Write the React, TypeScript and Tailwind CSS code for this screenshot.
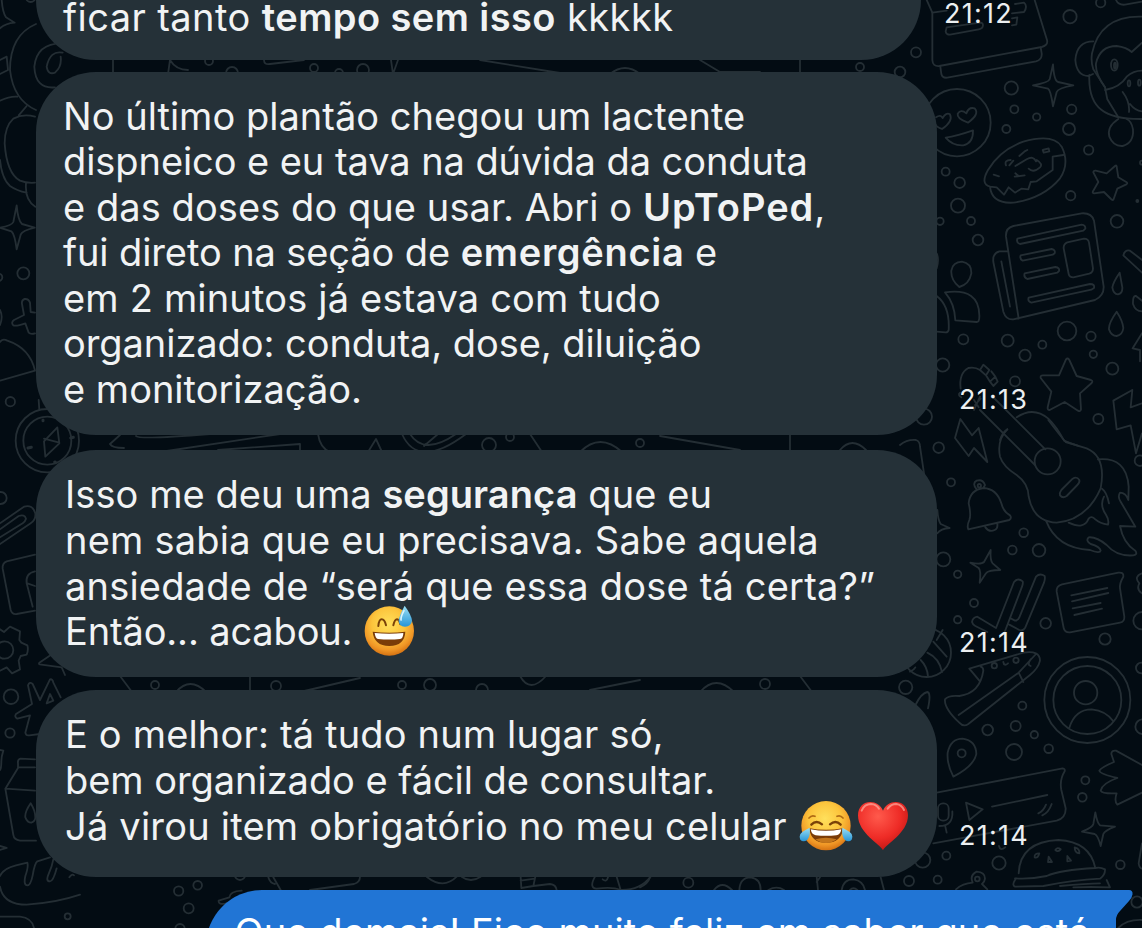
import type { ReactNode } from 'react';

interface BubbleRowProps {
  children: ReactNode;
  bubble: string;
  time: string;
  timeClass: string;
}

const Doodles = () => (
  <svg
    className="absolute inset-0 h-full w-full"
    viewBox="0 0 1142 928"
    fill="none"
    stroke="#242e34"
    strokeLinecap="round"
    strokeLinejoin="round"
  >
    <g transform="translate(900 0) scale(.33333)" strokeWidth="5.5">
      {/* laptop */}
      <path d="M80 0 L97 38 V180 Q98 200 118 198 L425 141 Q445 136 441 120 L404 0" />
      <path d="M97 38 L140 32 M121 200 L124 222 Q127 235 142 233 L408 184 Q427 179 425 160 L422 142" />
      <path d="M140 82 L240 68 Q252 68 248 80 Q246 86 236 88 L150 104 Q138 104 137 94 Z" />
      <path d="M336 40 L372 36 Q384 18 372 8 L345 12 M336 55 L352 52 L349 74 L336 76" />
      {/* heart eyes */}
      <circle cx="171" cy="368" r="101" />
      <path d="M108 352 Q122 342 128 354 Q138 336 150 343 Q160 364 126 387 Q110 382 106 372" />
      <path d="M204 368 Q170 356 173 341 Q183 326 199 340 Q206 320 224 325 Q240 342 204 368Z" />
      <path d="M137 413 Q170 408 219 391 Q220 430 190 436 Q158 438 137 413Z" />
      {/* sparkle */}
      <path d="M459 193 Q462 242 474 246 L520 256 Q474 264 470 276 L459 319 Q452 270 444 266 L399 256 Q446 248 449 238Z" />
      {/* donut */}
      <path d="M270 560 Q240 552 264 510 Q300 450 370 425 Q460 400 485 440 Q510 490 480 535 Q430 595 340 608 Q275 612 270 560 L290 562 L312 584 L326 562 L345 578 L364 566 L385 568 L392 546 L410 544 L458 510 V470 L490 465" />
      <path d="M428 450 L446 445 L448 454 L431 458Z M318 496 Q312 480 332 480 M328 496 L340 482 M346 498 L380 478 Q400 466 408 484 M358 468 L372 456 M374 454 L382 450 M410 480 Q430 492 420 502 Q400 520 386 506 M344 530 L374 526 M346 520 L356 528 M281 524 L297 529" />
      {/* monkey */}
      <path d="M726 50 Q600 46 576 160 Q572 185 580 208 L615 262 M580 124 Q530 124 526 180 Q530 228 566 228 L579 222 M568 225 Q565 300 605 330 Q640 358 726 357" />
      <path d="M615 262 Q585 220 588 190 Q600 138 650 138 Q680 142 695 156 L726 128 M615 270 Q660 262 680 230 Q700 212 726 212 M615 262 L622 298 L655 352 M668 276 Q690 305 687 336 M690 312 Q705 332 726 334" />
      <ellipse cx="643" cy="195" rx="10" ry="17" />
      <ellipse cx="645" cy="197" rx="3" ry="9" />
      <ellipse cx="687" cy="250" rx="4" ry="9" />
      <ellipse cx="718" cy="248" rx="4" ry="9" />
      <path d="M655 357 Q620 380 628 410 Q640 440 668 438 Q702 428 699 388 Q694 362 680 357" />
      {/* star */}
      <path d="M645 498 Q650 494 650 500 L655 532 L680 547 Q684 550 679 553 L652 566 L641 597 Q638 603 633 597 L612 576 L582 580 Q576 579 579 574 L595 546 L580 517 Q580 511 587 512 L620 520Z" />
      <path d="M648 0 Q655 16 675 14 L726 5" />
      <circle cx="602" cy="8" r="14" />
      <circle cx="510" cy="50" r="20" />
      <circle cx="48" cy="157" r="15" />
      <circle cx="0" cy="216" r="16" />
      <circle cx="334" cy="264" r="20" />
      <circle cx="343" cy="328" r="12" />
      <circle cx="410" cy="351" r="11" />
      <circle cx="319" cy="387" r="12" />
      <circle cx="515" cy="328" r="14" />
      <circle cx="507" cy="387" r="18" />
      <circle cx="566" cy="450" r="14" />
      <circle cx="512" cy="587" r="14" />
      <circle cx="137" cy="515" r="12" />
      <circle cx="179" cy="548" r="16" />
      <circle cx="712" cy="603" r="3" />
      <circle cx="726" cy="488" r="6" />
    </g>

    <g transform="translate(900 200) scale(.33333)" strokeWidth="5.5">
      {/* newspaper */}
      <path d="M356 356 L318 110 Q316 84 340 78 L545 40 Q575 38 582 62 L611 260 Q612 288 585 300 L340 358 Q318 360 310 335 L280 186 Q277 160 298 154 L323 154 M304 184 L330 320" />
      <path d="M352 116 L545 74 Q557 75 556 86 L550 92 L360 132 Q348 128 352 116Z M362 166 L455 147 Q467 150 464 160 L458 164 L368 182 Q358 176 362 166Z M374 220 L466 201 Q480 203 477 213 L472 218 L382 237 Q370 232 374 220Z M386 293 L570 252 Q585 252 582 264 L574 269 L394 308 Q382 304 386 293Z" />
      <path d="M502 127 L552 116 Q565 116 567 128 L579 205 Q579 218 568 221 L520 232 Q508 232 506 222 L491 145 Q490 132 502 127Z" />
      {/* people */}
      <path d="M178 261 Q152 240 154 212 Q158 186 186 185 Q215 190 214 220 Q208 252 178 261Z M135 277 Q240 262 238 350 Q238 366 230 366 L166 361 Q164 310 135 277Z M110 288 Q150 318 146 390 Q144 398 136 397 L110 395 M110 160 Q118 178 110 205" />
      <path d="M726 180 L690 152 Q674 148 670 166 L726 218" />
      <path d="M659 218 Q640 245 637 262 Q640 282 654 283 Q668 280 667 262Z M650 335 Q625 370 627 388 Q634 408 650 408 Q668 404 670 384 Q668 362 650 335Z M726 302 L708 288 Q698 286 699 312 Q706 334 726 334 M726 400 L698 445 L720 450 V484" />
      {/* star */}
      <path d="M498 478 Q503 472 508 480 L530 528 L573 540 Q580 543 575 549 L540 580 L543 628 Q541 636 534 632 L494 606 L449 630 Q442 630 443 622 L454 575 L422 534 Q420 526 429 526 L477 526Z" />
      <path d="M697 570 L640 602 L650 688 L692 676 L708 760 L726 700 M697 570 L692 622 L726 610" />
      {/* guitar head */}
      <path d="M182 566 Q176 520 205 504 Q225 500 240 510 M240 510 L250 494 L268 510 L258 526 L240 510 M258 526 L270 545 L286 530 L274 514 M270 545 L280 558 L293 545 L286 530 M222 630 L240 590 M180 578 Q172 585 184 592 M222 600 L236 622 M242 596 L225 615" />
      <path d="M240 630 L405 795 M276 588 L436 748 M350 652 Q400 618 445 656 Q470 680 492 722 Q510 730 535 738 M300 720 Q308 696 322 688" />
      <path d="M181 657 L165 714 L206 768 L222 744 L262 786 L236 684 L216 706Z" />
      <circle cx="174" cy="17" r="21" />
      <circle cx="120" cy="64" r="11" />
      <circle cx="213" cy="63" r="12" />
      <circle cx="234" cy="120" r="16" />
      <circle cx="651" cy="64" r="19" />
      <circle cx="190" cy="418" r="15" />
      <circle cx="323" cy="422" r="18" />
      <circle cx="375" cy="466" r="17" />
      <circle cx="427" cy="434" r="12" />
      <circle cx="501" cy="393" r="28" />
      <circle cx="573" cy="409" r="14" />
      <circle cx="580" cy="463" r="11" />
      <circle cx="637" cy="506" r="18" />
      <circle cx="345" cy="544" r="15" />
      <circle cx="128" cy="495" r="20" />
      <circle cx="595" cy="657" r="15" />
      <circle cx="72" cy="650" r="24" />
    </g>

    <g transform="translate(900 420) scale(.33333)" strokeWidth="5.5">
      {/* guitar body */}
      <path d="M322 28 Q290 60 300 110 Q310 140 350 165 Q385 190 386 230 Q400 305 470 308 Q560 300 602 205 Q620 110 560 85 L497 66 Q475 40 445 0" />
      <circle cx="443" cy="124" r="39" />
      <path d="M518 176 Q530 168 538 180 Q540 188 532 195 L500 228 Q488 236 480 226 Q478 218 484 210Z" />
      {/* unicorn */}
      <path d="M594 118 Q680 110 686 200 L685 240 Q678 218 660 218 Q652 230 662 245 L706 320 L660 318 Q670 370 706 392 Q714 404 700 406 Q650 410 620 375 Q590 350 566 352 Q556 362 572 372 Q600 380 602 392 Q600 402 570 390 Q470 385 438 302 M606 206 Q620 215 627 250 M612 230 Q598 256 618 284 Q628 300 624 314 Q600 310 586 298 Q574 286 566 296 Q552 330 506 308" />
      {/* bell */}
      <path d="M205 328 Q200 318 208 300 Q214 285 206 250 Q210 210 250 204 Q290 206 304 250 Q310 275 330 286 Q336 294 328 300Z M256 322 Q268 338 284 330 Q294 326 292 312 M230 208 Q215 190 230 182 Q248 176 255 195 L250 204" />
      <circle cx="238" cy="197" r="5" />
      {/* sparkles */}
      <path d="M272 390 Q270 422 278 430 L301 450 Q264 450 258 460 L239 488 Q244 452 236 444 L211 428 Q244 434 252 426Z M112 270 Q114 300 122 312 L149 324 Q122 326 112 340" />
      {/* checks */}
      <path d="M288 624 L342 486 Q354 472 368 484 Q370 490 366 500 L314 636 M288 624 L232 590 Q218 592 216 606 Q218 614 226 618 L262 636 M330 594 L345 602 Q354 602 358 592 L408 470 Q420 458 434 468 Q436 476 432 488 L376 622 Q370 634 358 630 L328 614" />
      {/* note */}
      <path d="M486 493 L655 458 Q672 456 670 470 Q658 490 660 505 L673 590 Q674 606 660 608 L510 637 Q494 638 491 624 L470 515 Q468 498 486 493Z M514 526 L622 504 M516 544 L625 519 M518 565 L602 549 M523 585 L606 566" />
      <path d="M0 75 Q20 58 48 60 Q60 64 60 80 L72 160 M726 460 Q700 470 718 490 Q708 508 726 520" />
      <circle cx="116" cy="83" r="16" />
      <circle cx="153" cy="187" r="12" />
      <circle cx="371" cy="338" r="13" />
      <circle cx="337" cy="390" r="13" />
      <circle cx="417" cy="391" r="19" />
      <circle cx="130" cy="418" r="21" />
      <circle cx="173" cy="463" r="11" />
      <circle cx="222" cy="549" r="12" />
      <circle cx="173" cy="599" r="11" />
      <circle cx="437" cy="610" r="16" />
      <circle cx="615" cy="657" r="17" />
      <circle cx="720" cy="122" r="16" />
      <circle cx="726" cy="602" r="26" />
    </g>

    <g transform="translate(900 640) scale(.33333)" strokeWidth="5.5">
      {/* ball */}
      <circle cx="80" cy="38" r="73" />
      <path d="M82 38 Q118 55 126 96 M100 5 L140 50 M62 60 Q82 80 84 110 M110 0 L128 -30 M30 95 Q42 90 46 82" />
      {/* sneaker */}
      <path d="M208 86 L370 38 Q420 30 420 62 Q415 85 390 105 L205 252 Q190 262 178 248 Q132 205 135 178 Q145 165 178 168 Q240 160 250 92 Q250 82 242 80 M208 86 L238 122 M176 225 L356 98 L408 42 M356 98 L370 126 M392 58 Q380 74 392 78" />
      <path d="M310 66 Q312 80 324 70" />
      <circle cx="283" cy="77" r="8" />
      <circle cx="348" cy="61" r="8" />
      {/* contact */}
      <circle cx="562" cy="180" r="129" />
      <circle cx="562" cy="180" r="102" />
      <circle cx="557" cy="158" r="35" />
      <path d="M508 263 Q525 208 575 208 Q618 212 640 244" />
      {/* pin */}
      <path d="M160 410 Q140 372 143 338 Q152 296 188 296 Q228 302 229 342 Q222 378 160 410Z" />
      <circle cx="185" cy="340" r="12" />
      {/* voice message */}
      <path d="M110 458 L488 385 Q496 386 494 394 Q478 420 484 450 L497 505 Q498 534 470 542 L100 610 M276 500 L442 465 M198 488 L248 508 L208 540Z M455 492 Q446 518 427 526 M438 494 Q430 514 415 520" />
      <rect x="114" y="490" width="32" height="52" rx="15" />
      <path d="M157 514 Q160 558 118 558 M136 560 L140 578" />
      <path d="M726 375 L648 332 Q634 330 634 342 L642 366 Q604 382 598 392 Q600 402 652 414 Q606 430 602 452 Q606 462 650 460 Q642 484 652 494 L726 458" />
      <path d="M586 517 Q592 550 600 556 L645 560 Q614 572 610 582 L602 618 Q594 586 584 582 L546 575 Q578 562 580 552Z" />
      {/* burger */}
      <path d="M356 700 Q360 605 475 600 Q570 605 586 684 M345 720 Q335 736 345 740 L430 738 Q520 720 600 716 Q616 705 615 688 Q600 680 586 684 Q480 690 440 708 Q390 718 345 715 M480 738 Q560 730 600 730 M520 742 Q570 740 630 742 L620 720" />
      <path d="M404 652 Q402 640 418 640 Q414 656 404 652Z M466 630 Q472 620 482 628 Q474 638 466 630Z M524 622 Q540 626 538 640 Q524 640 524 622Z M446 650 L456 666 L444 666Z M502 648 L513 662 L502 664Z" />
      <path d="M48 192 Q64 160 82 156 Q94 158 84 205 M168 748 Q188 730 218 728 Q208 706 230 695 Q255 696 255 716 Q254 726 246 732 L262 748" />
      <path d="M297 618 Q300 634 316 622" />
      <circle cx="232" cy="717" r="7" />
      <circle cx="17" cy="142" r="20" />
      <circle cx="367" cy="197" r="12" />
      <circle cx="347" cy="258" r="15" />
      <circle cx="263" cy="270" r="16" />
      <circle cx="403" cy="284" r="11" />
      <circle cx="342" cy="336" r="24" />
      <circle cx="446" cy="326" r="13" />
      <circle cx="556" cy="421" r="12" />
      <circle cx="547" cy="472" r="13" />
      <circle cx="661" cy="674" r="13" />
      <circle cx="297" cy="669" r="20" />
      <circle cx="139" cy="647" r="12" />
      <circle cx="68" cy="660" r="23" />
      <circle cx="27" cy="723" r="15" />
      <circle cx="113" cy="719" r="12" />
      <circle cx="724" cy="84" r="16" />
      <circle cx="728" cy="260" r="22" />
      <circle cx="711" cy="786" r="17" />
      <path d="M726 610 L716 670 Q718 684 726 686 M655 864 Q680 838 726 840" />
    </g>

    <g transform="scale(.33333)" strokeWidth="5.5">
      {/* headphones */}
      <path d="M5 0 Q8 38 18 52 L44 68 Q16 70 0 85 M108 72 Q30 105 30 210 Q40 300 108 330 M185 130 Q110 130 103 200 Q106 268 165 262 M188 158 Q150 150 140 200 Q144 226 165 218 Q186 200 182 170" />
      <path d="M0 180 L20 170 L24 210 L0 222 M0 302 Q30 288 52 290 M80 318 L56 346 M105 350 Q70 340 40 356 Q14 380 14 430 Q20 520 60 542 Q80 550 105 548 M0 480 Q5 535 30 558 Q50 572 80 578 M78 550 Q74 600 106 620" />
      <path d="M50 616 Q54 662 66 672 L104 683 Q66 692 62 704 L50 748 Q44 702 34 694 L0 683 Q36 676 40 666Z" />
      <path d="M105 938 L92 936 L90 908 Q86 896 74 897 Q64 900 66 912 L72 945 L42 960 Q32 968 40 976 Q48 980 76 970 L86 998 Q92 1004 105 1000 M0 930 Q10 950 0 975" />
      <path d="M0 1026 Q8 1014 22 1022 Q90 1045 105 1112 L0 1142" />
      {/* compass */}
      <circle cx="142" cy="1322" r="95" />
      <circle cx="142" cy="1322" r="72" />
      <path d="M172 1282 L132 1324 L136 1370 L178 1330Z M132 1316 L178 1328 M118 1230 L116 1200" />
      <path d="M84 1344 L94 1342 M212 1314 L220 1312 M129 1260 V1262 M164 1386 H166" strokeWidth="9" />
      <circle cx="70" cy="820" r="18" />
      <circle cx="31" cy="1205" r="14" />
      <circle cx="-4" cy="832" r="11" />
      <circle cx="92" cy="-8" r="14" />
    </g>

    <g transform="translate(0 420) scale(.33333)" strokeWidth="5.5">
      <path d="M0 310 L72 260 Q98 252 106 280 Q108 300 92 310 L0 372 M0 328 L56 288 Q74 282 78 296 Q76 304 68 310 L0 352" />
      <path d="M105 404 L20 424 Q6 430 8 446 L32 570 Q36 584 50 582 L105 572 M105 454 Q76 460 80 490 L98 560 M82 490 L105 498" />
      {/* gear */}
      <path d="M0 628 L12 636 L30 620 L60 634 L58 660 L64 668 L82 676 Q86 690 80 704 L62 708 L56 722 L60 748 L36 760 L20 742 L0 752" />
      <circle cx="14" cy="690" r="26" />
      <path d="M160 700 L118 728 Q114 734 124 734 L185 742 L195 765" />
      <path d="M120 840 L98 792 Q88 784 84 796 L96 852 L48 882 Q42 890 52 896 L90 886 L76 938 Q78 948 88 946 L120 942 M120 840 L150 778 Q158 776 160 788 L182 832 M140 850 L150 822 L160 842Z" />
      {/* milk */}
      <path d="M105 1018 L62 1016 Q52 1018 54 1030 L54 1042 H105 M54 1044 L16 1106 L40 1245 Q42 1260 60 1262 H108 M16 1106 L105 1112 M92 1150 Q74 1176 76 1192 Q82 1208 94 1208 Q106 1204 106 1192 Q106 1172 92 1150Z" />
      <path d="M0 990 L10 992 Q4 1010 4 1024 Q4 1046 0 1050 M0 1278 L20 1284 L0 1290" />
      {/* bread */}
      <path d="M0 1368 Q10 1345 48 1336 L82 1328 Q86 1340 76 1368 Q70 1396 82 1396 Q92 1396 98 1366 Q104 1330 112 1324 L150 1312 M160 1318 Q156 1340 146 1362 Q136 1384 150 1384 Q160 1384 170 1345 M0 1400 Q10 1454 80 1454 Q170 1448 240 1424 M0 1490 H60 Q96 1494 102 1524" />
      <path d="M208 1372 Q216 1360 222 1366" />
      <circle cx="2" cy="234" r="18" />
      <circle cx="33" cy="830" r="22" />
      <circle cx="30" cy="939" r="14" />
      <circle cx="203" cy="1489" r="9" />
    </g>

    {/* slivers visible between bubbles */}
    <g strokeWidth="1.8">
      <path d="M113 58 V74 M170 60 L168 74 M170 60 Q176 70 188 70 M264 60 Q264 65 270 64 L304 60 M391 60 L393 74 L398 60 M480 60 L560 73 M610 74 Q625 62 640 74 M700 60 L720 72 H760 M800 58 V74" />
      <circle cx="209" cy="61" r="4" />
      <circle cx="232" cy="73" r="6" />
      <circle cx="314" cy="68" r="4" />
      <circle cx="339" cy="73" r="4" />
      <circle cx="363" cy="70" r="6" />
      <circle cx="860" cy="67" r="4" />
      <path d="M120 435 L110 444 Q112 448 124 448 M136 436 Q138 440 210 434 M160 452 L280 434 M218 450 L300 444 V452 M318 434 Q320 448 330 452 M368 452 L376 439 L382 452 M402 434 Q418 470 466 434 M410 434 Q424 456 456 434 M424 446 L438 434 M530 434 L542 452 M580 452 Q600 432 622 452 M660 436 L740 450 M790 434 V452 M840 450 Q852 436 866 450" />
      <circle cx="489" cy="445" r="7" />
      <circle cx="510" cy="437" r="4" />
      <circle cx="640" cy="443" r="4" />
      <path d="M120 676 L132 692 M176 692 Q190 676 206 692 M250 676 V692 M300 692 L360 678 M520 676 Q530 694 546 676 M590 690 L640 680 M700 692 Q716 674 734 692 M800 676 L812 692" />
      <circle cx="155" cy="685" r="4" />
      <circle cx="276" cy="686" r="5" />
      <circle cx="402" cy="685" r="4" />
      <circle cx="430" cy="685" r="6" />
      <circle cx="482" cy="690" r="6" />
      <circle cx="765" cy="684" r="5" />
    </g>

    <g transform="translate(180 860) scale(.33333)" strokeWidth="5.5">
      <path d="M265 52 Q270 70 285 72 M280 52 L302 90 M540 50 Q540 66 522 72 L390 90 M740 50 Q790 90 830 50 M845 50 Q872 70 902 50 M1022 50 L1024 84 L1060 78 L1066 50 M1022 62 L1064 56 M1060 78 L1110 72 Q1128 74 1130 90 M1245 50 Q1226 84 1250 86 Q1300 80 1320 90 Q1380 92 1412 50 M1268 58 Q1280 68 1284 52 M1310 50 L1322 90 M185 92 Q150 94 148 112 L116 122 Q114 136 140 130" />
      <circle cx="53" cy="76" r="13" />
      <circle cx="26" cy="145" r="15" />
      <circle cx="-4" cy="93" r="14" />
      <circle cx="180" cy="44" r="16" />
      <circle cx="0" cy="206" r="14" />
    </g>
    <g transform="translate(640 860) scale(.33333)" strokeWidth="5.5">
      <path d="M30 52 Q24 72 0 82 M222 90 Q246 60 276 90 M298 90 Q300 52 332 52 Q362 56 362 90 M385 90 Q410 76 432 90 M530 50 L534 90 M530 66 L540 52 M605 90 Q610 58 640 58 Q670 62 675 90 M630 90 Q640 80 652 90 M722 52 L732 90" />
      <circle cx="145" cy="68" r="15" />
    </g>
  </svg>
);

const FaceGradient = ({ id }: { id: string }) => (
  <radialGradient id={id} cx=".48" cy=".36" r=".66">
    <stop offset="0" stopColor="#ffe05c" />
    <stop offset=".5" stopColor="#fcc43c" />
    <stop offset=".8" stopColor="#f09626" />
    <stop offset="1" stopColor="#d06c0f" />
  </radialGradient>
);

const DropGradient = ({ id }: { id: string }) => (
  <linearGradient id={id} x1="0" y1="0" x2="0" y2="1">
    <stop offset="0" stopColor="#9be0f5" />
    <stop offset="1" stopColor="#2795d6" />
  </linearGradient>
);

const SweatSmile = () => (
  <svg className="mb-1 h-[52px] w-[52px]" viewBox="0 0 156 156">
    <defs>
      <FaceGradient id="sweat-face" />
      <DropGradient id="sweat-drop" />
    </defs>
    <circle cx="76" cy="81" r="74" fill="url(#sweat-face)" />
    <path d="M43 66 Q45 46 53 46 Q62 46 66 64 M88 64 Q92 46 99 46 Q106 47 109 61" fill="none" stroke="#7a4208" strokeWidth="6" strokeLinecap="round" />
    <path d="M26 83 Q76 89 124 83 Q122 125 76 126 Q30 125 26 83Z" fill="#7a3c08" />
    <path d="M32 87 Q76 92 118 87 Q118 104 108 105 Q76 108 42 105 Q34 104 32 87Z" fill="#fff" />
    <path d="M122 5 Q143 34 144 50 Q142 67 123 68 Q104 66 104 50 Q105 36 122 5Z" fill="url(#sweat-drop)" />
    <path d="M120 20 Q110 38 111 48" fill="none" stroke="#d8f5fd" strokeWidth="5" strokeLinecap="round" />
  </svg>
);

const TearsOfJoy = () => (
  <svg className="h-[52px] w-[54px]" viewBox="0 0 162 156">
    <defs>
      <FaceGradient id="joy-face" />
      <DropGradient id="joy-tear" />
    </defs>
    <circle cx="81" cy="77" r="74" fill="url(#joy-face)" />
    <path d="M30 54 Q38 44 48 49 M114 49 Q124 44 132 54" fill="none" stroke="#b06a14" strokeWidth="5" strokeLinecap="round" />
    <path d="M37 74 Q52 58 69 73 M93 73 Q110 58 125 74" fill="none" stroke="#7a4208" strokeWidth="7" strokeLinecap="round" />
    <path d="M31 85 Q81 94 132 85 Q128 128 81 129 Q35 128 31 85Z" fill="#7a3c08" />
    <path d="M35 88 Q81 97 127 88 Q124 105 112 106 Q81 109 50 106 Q38 104 35 88Z" fill="#fff" />
    <path d="M49 118 Q81 108 113 118 Q100 129 81 129 Q62 129 49 118Z" fill="#c4761c" />
    <path d="M32 83 Q35 108 25 119 Q13 129 4 119 Q-2 104 10 96 Q18 90 32 83Z" fill="url(#joy-tear)" />
    <path d="M130 83 Q127 108 137 119 Q149 129 158 119 Q164 104 152 96 Q144 90 130 83Z" fill="url(#joy-tear)" />
  </svg>
);

const RedHeart = () => (
  <svg className="h-[52px] w-[52px]" viewBox="0 0 156 156">
    <defs>
      <radialGradient id="heart" cx=".4" cy=".3" r=".75">
        <stop offset="0" stopColor="#ff5a4c" />
        <stop offset=".6" stopColor="#ee2b26" />
        <stop offset="1" stopColor="#bd1512" />
      </radialGradient>
    </defs>
    <path d="M78 151 C70 132 3 100 3 46 C3 -4 64 -6 78 32 C92 -6 153 -4 153 46 C153 100 86 132 78 151Z" fill="url(#heart)" />
    <path d="M14 32 Q22 12 42 12 Q58 13 66 26 M92 26 Q102 12 118 12 Q134 14 141 30" fill="none" stroke="#ffb3a8" strokeOpacity=".65" strokeWidth="6" strokeLinecap="round" />
  </svg>
);

const BubbleRow = ({ children, bubble, time, timeClass }: BubbleRowProps) => (
  <div className="flex items-end">
    <div className={`ml-9 shrink-0 bg-[#253138] whitespace-nowrap ${bubble}`}>{children}</div>
    <time className={`text-[27px] leading-none tracking-[1.25px] text-[#eceff1] ${timeClass}`}>{time}</time>
  </div>
);

export default function App() {
  return (
    <div className="relative h-[928px] w-[1142px] overflow-hidden bg-[#030c13] font-['Inter',sans-serif] text-[38px] text-[#f1f3f4]">
      <Doodles />

      <main className="relative flex flex-col">
        <BubbleRow
          bubble="flex h-[60px] w-[885px] items-end rounded-b-[60px] pb-[20px] pl-[27px] leading-[46px]"
          time="21:12"
          timeClass="mb-[33px] ml-[23px]"
        >
          <p className="tracking-[0.43px]">
            ficar tanto <b className="font-semibold">tempo sem isso</b> kkkkk
          </p>
        </BubbleRow>

        <div className="mt-3">
          <BubbleRow
            bubble="h-[363px] w-[901px] rounded-[60px] pt-[21.5px] pl-[27px] leading-[45.5px]"
            time="21:13"
            timeClass="mb-[22px] ml-[22px]"
          >
            <p className="tracking-[0.02px]">No último plantão chegou um lactente</p>
            <p className="tracking-[-0.07px]">dispneico e eu tava na dúvida da conduta</p>
            <p className="tracking-[0.07px]">
              e das doses do que usar. Abri o <b className="font-semibold tracking-[1px]">UpToPed</b>,
            </p>
            <p className="tracking-[-0.1px]">
              fui direto na seção de <b className="font-semibold tracking-[0.7px]">emergência</b> e
            </p>
            <p className="tracking-[0.18px]">em 2 minutos já estava com tudo</p>
            <p className="tracking-[-0.06px]">organizado: conduta, dose, diluição</p>
            <p>e monitorização.</p>
          </BubbleRow>
        </div>

        <div className="mt-[15px]">
          <BubbleRow
            bubble="h-[227px] w-[901px] rounded-[60px] pt-[22px] pl-[29px] leading-[45.8px]"
            time="21:14"
            timeClass="mb-[21px] ml-[22px]"
          >
            <p className="tracking-[0.07px]">
              Isso me deu uma <b className="font-semibold">segurança</b> que eu
            </p>
            <p className="tracking-[0.23px]">nem sabia que eu precisava. Sabe aquela</p>
            <p className="tracking-[0.19px]">ansiedade de “será que essa dose tá certa?”</p>
            <div className="flex h-[46px] items-center gap-3">
              <p className="tracking-[-0.15px]">Então... acabou.</p>
              <SweatSmile />
            </div>
          </BubbleRow>
        </div>

        <div className="mt-[13px]">
          <BubbleRow
            bubble="h-[187px] w-[901px] rounded-[60px] pt-[20.5px] pl-[29px] leading-[46px]"
            time="21:14"
            timeClass="mb-[28px] ml-[22px]"
          >
            <p className="tracking-[0.17px]">E o melhor: tá tudo num lugar só,</p>
            <p className="tracking-[-0.05px]">bem organizado e fácil de consultar.</p>
            <div className="flex h-[46px] items-center">
              <p className="tracking-[0.21px]">Já virou item obrigatório no meu celular</p>
              <div className="ml-3 flex gap-1">
                <TearsOfJoy />
                <RedHeart />
              </div>
            </div>
          </BubbleRow>
        </div>

        <div className="relative mt-[13px] ml-[206px] h-[120px] w-[910px] rounded-tl-[56px] bg-[#2175d5] pt-[19px] pl-[28.5px] leading-[46px] whitespace-nowrap text-white">
          <p className="tracking-[0.11px]">Que demais! Fico muito feliz em saber que está</p>
          <svg className="absolute top-0 left-[909px] h-[30px] w-[18px]" viewBox="0 0 18 30">
            <path d="M0 0 H14 Q18 0 17.500 4.500 Q17 8 14 11 L5 21 Q1 25 1 30 H0Z" fill="#2175d5" />
          </svg>
        </div>
      </main>
    </div>
  );
}
